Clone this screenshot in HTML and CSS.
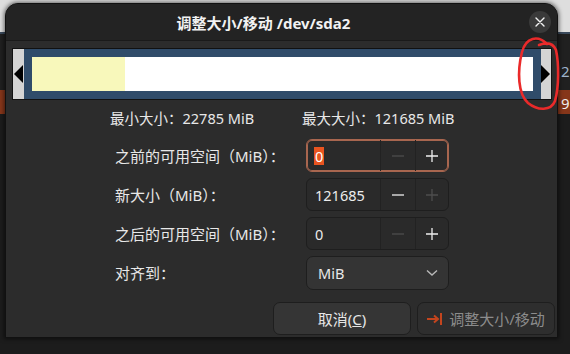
FILE: index.html
```html
<!DOCTYPE html>
<html lang="zh-CN">
<head>
  <meta charset="UTF-8">
  <meta name="viewport" content="width=device-width, initial-scale=1.0">
  <title>调整大小/移动 /dev/sda2</title>
  <link rel="stylesheet" href="styles.css">
</head>
<body>

<div class="backdrop">
  <span class="bg-num bg-num-a">2</span>
  <span class="bg-num bg-num-b">9</span>
</div>

<div class="dialog">
  <header class="titlebar">
    <h1 class="title">调整大小/移动 /dev/sda2</h1>
    <button class="close-btn" aria-label="关闭">
      <svg width="10" height="10" viewBox="0 0 10 10"><path d="M1 1L9 9M9 1L1 9" stroke="#f2f2f2" stroke-width="1.4" stroke-linecap="round"/></svg>
    </button>
  </header>

  <div class="content">
    <div class="partbar">
      <div class="handle handle-left"><span class="tri tri-left"></span></div>
      <div class="part">
        <div class="part-fill">
          <div class="used"></div>
        </div>
      </div>
      <div class="handle handle-right"><span class="tri tri-right"></span></div>
    </div>

    <div class="limits">
      <span class="limit-min">最小大小：22785 MiB</span>
      <span>最大大小：121685 MiB</span>
    </div>

    <div class="form">
      <label class="form-label">之前的可用空间（MiB）：</label>
      <div class="spin spin-focused">
        <div class="spin-entry"><span class="selected">0</span></div>
        <div class="spin-btn spin-minus disabled">
          <svg width="12" height="12" viewBox="0 0 12 12"><path d="M0 6H12" stroke="currentColor" stroke-width="1.3"/></svg>
        </div>
        <div class="spin-btn spin-plus">
          <svg width="12" height="12" viewBox="0 0 12 12"><path d="M0 6H12M6 0V12" stroke="currentColor" stroke-width="1.3"/></svg>
        </div>
      </div>

      <label class="form-label">新大小（MiB）：</label>
      <div class="spin">
        <div class="spin-entry">121685</div>
        <div class="spin-btn spin-minus">
          <svg width="12" height="12" viewBox="0 0 12 12"><path d="M0 6H12" stroke="currentColor" stroke-width="1.3"/></svg>
        </div>
        <div class="spin-btn spin-plus disabled">
          <svg width="12" height="12" viewBox="0 0 12 12"><path d="M0 6H12M6 0V12" stroke="currentColor" stroke-width="1.3"/></svg>
        </div>
      </div>

      <label class="form-label">之后的可用空间（MiB）：</label>
      <div class="spin">
        <div class="spin-entry">0</div>
        <div class="spin-btn spin-minus disabled">
          <svg width="12" height="12" viewBox="0 0 12 12"><path d="M0 6H12" stroke="currentColor" stroke-width="1.3"/></svg>
        </div>
        <div class="spin-btn spin-plus">
          <svg width="12" height="12" viewBox="0 0 12 12"><path d="M0 6H12M6 0V12" stroke="currentColor" stroke-width="1.3"/></svg>
        </div>
      </div>

      <label class="form-label">对齐到：</label>
      <div class="combo">
        <span>MiB</span>
        <svg width="12" height="8" viewBox="0 0 12 8"><path d="M1 1.5L6 6L11 1.5" fill="none" stroke="#b8b8b8" stroke-width="1.4"/></svg>
      </div>
    </div>

    <div class="actions">
      <button class="btn btn-cancel"><span>取消(<u>C</u>)</span></button>
      <button class="btn btn-apply" disabled>
        <svg width="16" height="12" viewBox="0 0 16 12"><path d="M0 6H11M7 2.5L11 6L7 9.5" fill="none" stroke="#c4451e" stroke-width="2"/><path d="M14 0V12" stroke="#c4451e" stroke-width="2"/></svg>
        <span>调整大小/移动</span>
      </button>
    </div>
  </div>
</div>

<svg class="scribble" width="570" height="354" viewBox="0 0 570 354">
  <path d="M547 44 C538 35, 526 37, 522 52 C517 72, 518 94, 528 103 C538 111, 551 111, 555 101 C559 87, 559 64, 556 50 C553 43, 547 42, 539 45" fill="none" stroke="#ea2a2a" stroke-width="2.6" stroke-linecap="round"/>
</svg>

</body>
</html>
```

FILE: styles.css
```css
body {
  margin: 0;
  width: 570px;
  height: 354px;
  overflow: hidden;
  position: relative;
  font-family: "Noto Sans", "Noto Sans CJK SC", sans-serif;
  font-size: 15px;
  color: #e8e8e8;
  background: linear-gradient(to bottom,
    #dedede 0, #dedede 32px,
    #3a4a5c 32px, #3a4a5c 34px,
    #202020 34px, #202020 90px,
    #86361a 90px, #86361a 114px,
    #1c1c1c 114px);
}
.backdrop {
  position: absolute;
  inset: 0;
}
.bg-num {
  position: absolute;
  left: 561px;
  font-size: 15px;
  line-height: 18px;
}
.bg-num-a {
  top: 62px;
  color: #9fb4cc;
}
.bg-num-b {
  top: 94px;
  color: #eee;
}
.dialog {
  position: relative;
  margin: 3px 0 0 5px;
  width: 553px;
  height: 335px;
  box-sizing: border-box;
  border: 1px solid #111;
  border-radius: 13px 13px 0 0;
  background: #2c2c2c;
  box-shadow: 0 0 4px 1px rgba(0, 0, 0, 0.55);
}
.titlebar {
  height: 36px;
  padding-right: 36px;
  background: #232323;
  border-bottom: 1px solid #1a1a1a;
  border-radius: 12px 12px 0 0;
  display: flex;
  align-items: center;
  justify-content: center;
  position: relative;
}
.title {
  margin: 0;
  font-size: 15px;
  font-weight: bold;
  color: #f2f2f2;
}
.close-btn {
  position: absolute;
  right: 6px;
  top: 7px;
  width: 22px;
  height: 22px;
  border: none;
  border-radius: 50%;
  background: #3a3a3a;
  padding: 0;
  display: flex;
  align-items: center;
  justify-content: center;
}
.content {
  padding: 7px 5px 0 6px;
}
.partbar {
  display: flex;
  height: 52px;
  box-sizing: border-box;
  border: 1px solid #111;
}
.handle {
  background: #d4d4d4;
  display: flex;
  align-items: center;
}
.handle-left {
  width: 11px;
  padding-left: 1px;
  box-sizing: border-box;
}
.handle-right {
  width: 10px;
}
.tri {
  width: 0;
  height: 0;
  border-top: 9.5px solid transparent;
  border-bottom: 9.5px solid transparent;
}
.tri-left {
  border-right: 9px solid #000;
}
.tri-right {
  border-left: 9px solid #000;
}
.part {
  flex: 1;
  background: #304c6a;
  padding: 8px;
}
.part-fill {
  height: 100%;
  background: #fff;
}
.used {
  width: 93px;
  height: 100%;
  background: #f8f8bb;
}
.limits {
  display: flex;
  margin-top: 8px;
  padding-left: 98px;
  line-height: 20px;
  font-size: 14.5px;
}
.limit-min {
  width: 192px;
}
.form {
  display: grid;
  grid-template-columns: 191px 143px;
  grid-auto-rows: 33px;
  row-gap: 6px;
  margin: 11px 0 0 103px;
}
.form-label {
  display: flex;
  align-items: center;
}
.spin {
  display: flex;
  box-sizing: border-box;
  border: 1px solid #1e1e1e;
  border-radius: 6px;
  background: #2a2a2a;
  font-size: 14.5px;
}
.spin-focused {
  border-color: #a8664f;
  box-shadow: inset 0 0 0 1px #a8664f;
}
.spin-entry {
  flex: 1;
  padding-left: 8px;
  display: flex;
  align-items: center;
  color: #ececec;
}
.selected {
  background: #e95420;
  color: #fff;
  line-height: 18px;
  padding: 0 1px;
  margin-left: -1px;
}
.spin-btn {
  display: flex;
  align-items: center;
  justify-content: center;
  border-left: 1px solid #222;
  color: #efefef;
}
.spin-minus {
  width: 35px;
  box-sizing: border-box;
}
.spin-plus {
  width: 33px;
  box-sizing: border-box;
}
.spin-btn.disabled {
  color: #4e4e4e;
}
.combo {
  height: 34px;
  box-sizing: border-box;
  border: 1px solid #1e1e1e;
  border-radius: 7px;
  background: #343434;
  padding: 0 10px 0 11px;
  display: flex;
  align-items: center;
  justify-content: space-between;
  font-size: 14.5px;
}
.actions {
  display: flex;
  justify-content: flex-end;
  gap: 6px;
  margin: 13px -3px 0 0;
}
.btn {
  width: 138px;
  height: 33px;
  border: 1px solid #1e1e1e;
  border-radius: 7px;
  font-family: inherit;
  font-size: 15px;
  display: flex;
  align-items: center;
  justify-content: center;
  gap: 6px;
}
.btn-cancel {
  background: #353535;
  color: #e6e6e6;
}
.btn-apply {
  background: #2e2e2e;
  color: #8c8c8c;
}
.scribble {
  position: absolute;
  left: 0;
  top: 0;
  pointer-events: none;
}
```
